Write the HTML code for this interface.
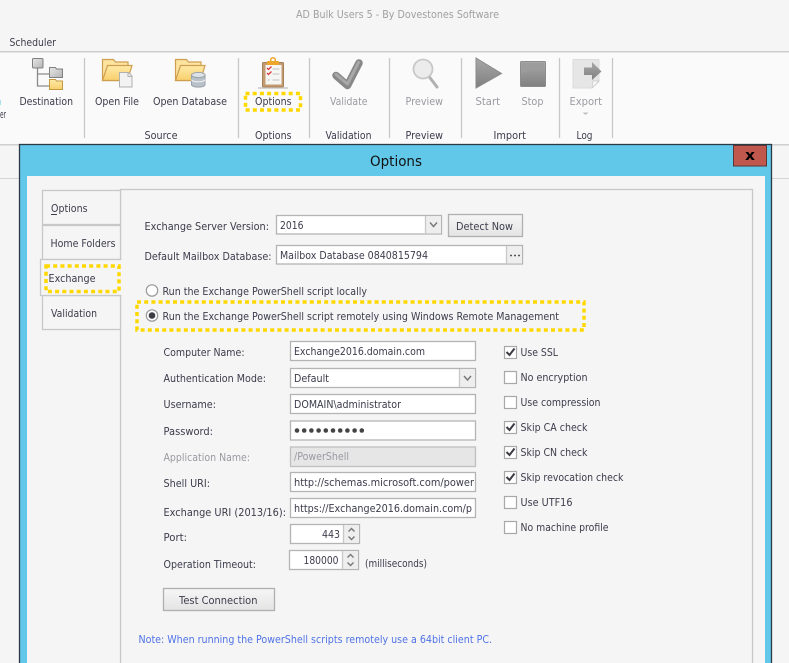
<!DOCTYPE html>
<html><head><meta charset="utf-8"><style>
html,body{margin:0;padding:0;background:#f5f5f5;width:789px;height:663px;overflow:hidden}
svg{display:block}
text{font-family:"DejaVu Sans",sans-serif;font-size:11px;fill:#3c3c4c}
.g{fill:#9a9aa2}
.w{fill:none;stroke:#ffd800;stroke-width:3.5;stroke-dasharray:4 3.2}
.f{fill:#fff;stroke:#b4b4b4;stroke-width:1.3}
.t{fill:#f5f5f5;stroke:#c8c8c8;stroke-width:1.3}
.s{fill:none;stroke:#c8c8c8;stroke-width:1.3}
.c{fill:#fff;stroke:#a8a8a8;stroke-width:1.2}
.k{fill:none;stroke:#3c3c44;stroke-width:2}
.a{fill:none;stroke:#777;stroke-width:1.4}
</style></head><body>
<svg width="789" height="663" viewBox="0 0 789 663" xmlns="http://www.w3.org/2000/svg">
<defs>
<linearGradient id="y" x1="0" y1="0" x2="0" y2="1"><stop offset="0" stop-color="#ffeaa8"/><stop offset="1" stop-color="#f8cf6c"/></linearGradient>
<linearGradient id="gr" x1="0" y1="0" x2="1" y2="1"><stop offset="0" stop-color="#e8e8e8"/><stop offset="1" stop-color="#b4b4b4"/></linearGradient>
<linearGradient id="dk" x1="0" y1="0" x2="0" y2="1"><stop offset="0" stop-color="#a8a8a8"/><stop offset="1" stop-color="#808080"/></linearGradient>
<linearGradient id="b" x1="0" y1="0" x2="0" y2="1"><stop offset="0" stop-color="#f6f6f6"/><stop offset="1" stop-color="#e4e4e4"/></linearGradient>
</defs>
<rect width="789" height="663" fill="#f5f5f5"/>
<rect y="52" width="789" height="92" fill="#fafafa"/>
<rect y="51" width="789" height="1.5" fill="#cfcfcf"/>
<rect y="144" width="789" height="1.5" fill="#cfcfcf"/>
<rect y="178" width="20" height="1" fill="#d4d4d4"/>
<rect x="772" y="178" width="17" height="1" fill="#d4d4d4"/>

<text x="296" y="18" textLength="203" lengthAdjust="spacingAndGlyphs" style="fill:#a0a0a0">AD Bulk Users 5 - By Dovestones Software</text>
<text x="9.5" y="46" textLength="46.5" lengthAdjust="spacingAndGlyphs">Scheduler</text>

<!-- ribbon separators -->
<path class="s" d="M84.5 58V138M238.5 58V138M309.5 58V138M389.5 58V138M461.5 58V138M559.5 58V138M612.5 58V138"/>

<!-- destination icon -->
<path d="M37.5 68V86H49M37.5 74H49" fill="none" stroke="#8a8a8a" stroke-width="1.3"/>
<rect x="32.5" y="58.5" width="10.5" height="9.500" rx="1" fill="url(#gr)" stroke="#808080"/>
<path d="M49.5 77.500V67.500h6l1 1.500h6v8.500z" fill="url(#gr)" stroke="#808080"/>
<path d="M49.500 89.500V79.500h6l1 1.500h6v8.500z" fill="url(#y)" stroke="#c49a40"/>
<!-- open file icon -->
<path d="M102.500 80.500V59.500h11l2 2.500h12.500V80.500z" fill="#fbe3a0" stroke="#cf9f50" stroke-width="1.200"/>
<path d="M102.500 80.500l5-15h24.500l-4.500 15z" fill="url(#y)" stroke="#cf9f50" stroke-width="1.200"/>
<path d="M119.500 72.500h9l3.500 3.500v11h-12.500z" fill="#f2f2f2" stroke="#b0b0b0"/>
<path d="M128 73v3.500h3.500" fill="none" stroke="#b0b0b0"/>
<!-- open database icon -->
<path d="M175.500 80.500V59.500h11l2 2.500h12.500V80.500z" fill="#fbe3a0" stroke="#cf9f50" stroke-width="1.200"/>
<path d="M175.500 80.500l5-15h24.500l-4.500 15z" fill="url(#y)" stroke="#cf9f50" stroke-width="1.200"/>
<path d="M191.500 75v9.500c0 3.500 13.500 3.500 13.500 0V75z" fill="#b8c0c8" stroke="#98a0a8"/>
<ellipse cx="198.300" cy="75" rx="6.800" ry="2.600" fill="#dde2e6" stroke="#98a0a8"/>
<path d="M191.500 79.500c0 3 13.500 3 13.500 0" fill="none" stroke="#eef0f2"/>
<!-- clipboard -->
<rect x="258" y="87" width="30" height="2" fill="#d4d4d4"/>
<rect x="262.500" y="62.500" width="21" height="24.500" rx="1" fill="#c49a72" stroke="#a88058"/>
<rect x="265.500" y="65" width="16" height="19.500" fill="#f6f6f2"/>
<rect x="267" y="61" width="12" height="4" rx="1" fill="#eda52a"/>
<circle cx="273" cy="60" r="2.300" fill="none" stroke="#eda52a" stroke-width="1.500"/>
<path d="M267 68l1.500 1.500 3-3M267 73l1.500 1.500 3-3" fill="none" stroke="#d8383c" stroke-width="1.300"/>
<circle cx="268.500" cy="80" r="1" fill="#ccc"/>
<path d="M272.500 69h7M272.500 74h7M272.500 80h7" stroke="#c0c0c0"/>
<!-- validate -->
<path d="M336 75.500L347.500 85.500L359 63" fill="none" stroke="#888" stroke-width="7.500" stroke-linecap="round" stroke-linejoin="round"/>
<path d="M336 74.500L347.500 84L358.500 62.500" fill="none" stroke="#a8a8a8" stroke-width="3" stroke-linecap="round" stroke-linejoin="round"/>
<!-- preview -->
<path d="M429 76.500L437 87" stroke="#b0b0b0" stroke-width="3" stroke-linecap="round"/>
<circle cx="423" cy="69" r="9.500" fill="#ececec" stroke="#c8c8c8" stroke-width="1.800"/>
<!-- start stop -->
<path d="M476 58L501.500 73.500L476 88z" fill="url(#dk)" stroke="#8a8a8a"/>
<rect x="520.500" y="61.500" width="25" height="25" rx="1" fill="url(#dk)" stroke="#8c8c8c"/>
<path d="M522 74c5-5 14-6 22-6v-5h-22z" fill="#9c9c9c"/>
<!-- export -->
<path d="M573 59.500h26v22l-7 6.500h-19z" fill="#e6e6e6" stroke="#dcdcdc"/>
<path d="M592 88l1-7h6z" fill="#f8f8f8" stroke="#c8c8c8" stroke-width=".7"/>
<path d="M584 67.500h8V62l9.500 9.500-9.500 8.500v-5h-8z" fill="url(#dk)"/>
<path d="M582.500 112.500h6l-3 2.500z" fill="#c0c0c0"/>

<!-- ribbon text -->
<text x="0" y="118" textLength="6" lengthAdjust="spacingAndGlyphs">er</text>
<rect x="0" y="100" width="1" height="5" fill="#a8e0ec"/>
<text x="19.500" y="105" textLength="53.500" lengthAdjust="spacingAndGlyphs">Destination</text>
<text x="95" y="105" textLength="44" lengthAdjust="spacingAndGlyphs">Open File</text>
<text x="153" y="105" textLength="74" lengthAdjust="spacingAndGlyphs">Open Database</text>
<text x="255" y="105" textLength="36.500" lengthAdjust="spacingAndGlyphs">Options</text>
<text class="g" x="330" y="105" textLength="37.500" lengthAdjust="spacingAndGlyphs">Validate</text>
<text class="g" x="405.500" y="105" textLength="37.500" lengthAdjust="spacingAndGlyphs">Preview</text>
<text class="g" x="475.500" y="105" textLength="24.500" lengthAdjust="spacingAndGlyphs">Start</text>
<text class="g" x="521.500" y="105" textLength="22" lengthAdjust="spacingAndGlyphs">Stop</text>
<text class="g" x="569.500" y="105" textLength="32.500" lengthAdjust="spacingAndGlyphs">Export</text>
<text x="144.500" y="139" textLength="33" lengthAdjust="spacingAndGlyphs">Source</text>
<text x="255" y="139" textLength="36.500" lengthAdjust="spacingAndGlyphs">Options</text>
<text x="325.500" y="139" textLength="46" lengthAdjust="spacingAndGlyphs">Validation</text>
<text x="405.500" y="139" textLength="37.500" lengthAdjust="spacingAndGlyphs">Preview</text>
<text x="493.500" y="139" textLength="32.500" lengthAdjust="spacingAndGlyphs">Import</text>
<text x="576.500" y="139" textLength="16" lengthAdjust="spacingAndGlyphs">Log</text>
<rect class="w" x="245.500" y="93.500" width="55" height="16.500"/>

<!-- dialog -->
<rect x="19.500" y="144.500" width="752" height="530" fill="#62c8ea" stroke="#2c3a46" stroke-width="1.300"/>
<rect x="27" y="176" width="738" height="490" fill="#f5f5f5"/>
<text x="370" y="166" textLength="52" lengthAdjust="spacingAndGlyphs" style="font-size:14.500px;fill:#111">Options</text>
<rect x="733.500" y="145.500" width="33" height="20.500" fill="#c0584e" stroke="#5c3632"/>
<text x="745" y="160" textLength="10" lengthAdjust="spacingAndGlyphs" style="font-size:14px;font-weight:bold;fill:#000">x</text>

<!-- tabs -->
<rect class="t" x="120.500" y="189.500" width="632" height="490"/>
<rect class="t" x="42.500" y="190.500" width="78" height="34"/>
<rect class="t" x="42.500" y="225.500" width="78" height="34"/>
<rect class="t" x="42.500" y="295.500" width="78" height="34"/>
<rect x="40.500" y="259.500" width="81" height="35.500" fill="#f5f5f5"/>
<path class="s" d="M121.500 259.500H40.500V295.500H121.500"/>
<text x="51" y="212" textLength="36.500" lengthAdjust="spacingAndGlyphs">Options</text>
<rect x="51" y="214" width="6" height="1" fill="#3c3c4c"/>
<text x="50.500" y="247" textLength="65" lengthAdjust="spacingAndGlyphs">Home Folders</text>
<text x="48.500" y="282" textLength="47" lengthAdjust="spacingAndGlyphs">Exchange</text>
<text x="51" y="317" textLength="46" lengthAdjust="spacingAndGlyphs">Validation</text>
<rect class="w" x="46" y="266" width="73" height="25.500"/>

<!-- top form -->
<text x="144.500" y="230" textLength="124.500" lengthAdjust="spacingAndGlyphs">Exchange Server Version:</text>
<text x="144.500" y="260" textLength="127" lengthAdjust="spacingAndGlyphs">Default Mailbox Database:</text>
<rect class="f" x="276.500" y="215.500" width="165" height="18.500"/>
<rect x="426" y="216.500" width="15" height="17" fill="#eee"/>
<path class="s" d="M425.500 216V234"/>
<path class="a" d="M430 222.500l3.500 4 3.500-4" stroke-width="1.700"/>
<text x="280" y="229" textLength="23.500" lengthAdjust="spacingAndGlyphs">2016</text>
<rect x="448.500" y="214.500" width="74" height="22" fill="url(#b)" stroke="#b0b0b0" stroke-width="1.300"/>
<text x="456" y="230" textLength="57" lengthAdjust="spacingAndGlyphs">Detect Now</text>
<rect class="f" x="276.500" y="245.500" width="246" height="18.500"/>
<rect x="507" y="246.500" width="15" height="17" fill="#eee"/>
<path class="s" d="M506.500 246V264"/>
<path d="M510 255.500h2M514 255.500h2M518 255.500h2" stroke="#555" stroke-width="1.500"/>
<text x="280" y="259" textLength="148" lengthAdjust="spacingAndGlyphs">Mailbox Database 0840815794</text>

<!-- radios -->
<circle cx="152" cy="290.500" r="5.700" fill="#fff" stroke="#999" stroke-width="1.200"/>
<circle cx="152" cy="315.500" r="5.700" fill="#fff" stroke="#999" stroke-width="1.200"/>
<circle cx="152" cy="315.500" r="3.300" fill="#3c3c44"/>
<text x="162.500" y="295" textLength="204.500" lengthAdjust="spacingAndGlyphs">Run the Exchange PowerShell script locally</text>
<text x="162.500" y="320" textLength="396.500" lengthAdjust="spacingAndGlyphs">Run the Exchange PowerShell script remotely using Windows Remote Management</text>
<rect class="w" x="137" y="302" width="447" height="28"/>

<!-- labels -->
<text x="163.500" y="356" textLength="81" lengthAdjust="spacingAndGlyphs">Computer Name:</text>
<text x="163.500" y="382" textLength="102.500" lengthAdjust="spacingAndGlyphs">Authentication Mode:</text>
<text x="163.500" y="408" textLength="52.500" lengthAdjust="spacingAndGlyphs">Username:</text>
<text x="163.500" y="435" textLength="49.500" lengthAdjust="spacingAndGlyphs">Password:</text>
<text class="g" x="163.500" y="461" textLength="86.500" lengthAdjust="spacingAndGlyphs">Application Name:</text>
<text x="163.500" y="487" textLength="46.500" lengthAdjust="spacingAndGlyphs">Shell URI:</text>
<text x="163.500" y="516" textLength="122.500" lengthAdjust="spacingAndGlyphs">Exchange URI (2013/16):</text>
<text x="163.500" y="541" textLength="23.500" lengthAdjust="spacingAndGlyphs">Port:</text>
<text x="163.500" y="568" textLength="92.500" lengthAdjust="spacingAndGlyphs">Operation Timeout:</text>

<!-- fields -->
<rect class="f" x="290.500" y="341.500" width="185" height="19"/>
<text x="294" y="355" textLength="131" lengthAdjust="spacingAndGlyphs">Exchange2016.domain.com</text>
<rect class="f" x="290.500" y="368.500" width="185" height="19"/>
<rect x="460" y="369.500" width="15" height="17" fill="#eee"/>
<path class="s" d="M459.500 369V387"/>
<path class="a" d="M464 376l3.500 4 3.500-4" stroke-width="1.700"/>
<text x="294" y="382" textLength="35" lengthAdjust="spacingAndGlyphs">Default</text>
<rect class="f" x="290.500" y="394.500" width="185" height="19"/>
<text x="294" y="408" textLength="107" lengthAdjust="spacingAndGlyphs">DOMAIN\administrator</text>
<rect class="f" x="290.500" y="421" width="185" height="19"/>
<g fill="#444"><circle cx="297" cy="430.500" r="2.300"/><circle cx="304.200" cy="430.500" r="2.300"/><circle cx="311.400" cy="430.500" r="2.300"/><circle cx="318.600" cy="430.500" r="2.300"/><circle cx="325.800" cy="430.500" r="2.300"/><circle cx="333" cy="430.500" r="2.300"/><circle cx="340.200" cy="430.500" r="2.300"/><circle cx="347.400" cy="430.500" r="2.300"/><circle cx="354.600" cy="430.500" r="2.300"/><circle cx="361.800" cy="430.500" r="2.300"/></g>
<rect x="290.500" y="447" width="185" height="19.500" fill="#e6e6e6" stroke="#c0c0c0" stroke-width="1.300"/>
<text class="g" x="294" y="460" textLength="55" lengthAdjust="spacingAndGlyphs">/PowerShell</text>
<rect class="f" x="290.500" y="472.500" width="185" height="19"/>
<text x="294" y="486" textLength="180" lengthAdjust="spacingAndGlyphs">http://schemas.microsoft.com/power</text>
<rect class="f" x="290.500" y="498.500" width="185" height="19"/>
<text x="294" y="512" textLength="178" lengthAdjust="spacingAndGlyphs">https://Exchange2016.domain.com/p</text>

<rect class="f" x="290.500" y="524.500" width="69" height="19"/>
<rect x="344" y="525.500" width="15" height="17" fill="#eee"/>
<path class="s" d="M343.500 525V543"/>
<path class="a" d="M348.500 531.500l3-3 3 3M348.500 536.500l3 3 3-3"/>
<text x="322" y="538" textLength="18" lengthAdjust="spacingAndGlyphs">443</text>
<rect class="f" x="289.500" y="550.500" width="69" height="19"/>
<rect x="343" y="551.500" width="15" height="17" fill="#eee"/>
<path class="s" d="M342.500 551V569"/>
<path class="a" d="M347.500 557.500l3-3 3 3M347.500 562.500l3 3 3-3"/>
<text x="303.500" y="564" textLength="35" lengthAdjust="spacingAndGlyphs">180000</text>
<text x="365" y="567" textLength="62" lengthAdjust="spacingAndGlyphs">(milliseconds)</text>

<rect x="163.500" y="588.500" width="111" height="22" fill="url(#b)" stroke="#b0b0b0" stroke-width="1.300"/>
<text x="179" y="604" textLength="78.500" lengthAdjust="spacingAndGlyphs">Test Connection</text>
<text x="138.500" y="643" textLength="353.500" lengthAdjust="spacingAndGlyphs" style="fill:#4f72e6">Note: When running the PowerShell scripts remotely use a 64bit client PC.</text>

<!-- checkboxes -->
<rect class="c" x="504.500" y="346.500" width="12" height="12"/>
<rect class="c" x="504.500" y="371.500" width="12" height="12"/>
<rect class="c" x="504.500" y="396.500" width="12" height="12"/>
<rect class="c" x="504.500" y="421.500" width="12" height="12"/>
<rect class="c" x="504.500" y="446.500" width="12" height="12"/>
<rect class="c" x="504.500" y="471.500" width="12" height="12"/>
<rect class="c" x="504.500" y="496.500" width="12" height="12"/>
<rect class="c" x="504.500" y="521.500" width="12" height="12"/>
<path class="k" d="M506.500 352l3 3 5-6.500M506.500 427l3 3 5-6.500M506.500 452l3 3 5-6.500M506.500 477l3 3 5-6.500"/>
<text x="520.500" y="356" textLength="37.500" lengthAdjust="spacingAndGlyphs">Use SSL</text>
<text x="520.500" y="381" textLength="67" lengthAdjust="spacingAndGlyphs">No encryption</text>
<text x="520.500" y="406" textLength="80" lengthAdjust="spacingAndGlyphs">Use compression</text>
<text x="520.500" y="431" textLength="67" lengthAdjust="spacingAndGlyphs">Skip CA check</text>
<text x="520.500" y="456" textLength="67" lengthAdjust="spacingAndGlyphs">Skip CN check</text>
<text x="520.500" y="481" textLength="103" lengthAdjust="spacingAndGlyphs">Skip revocation check</text>
<text x="520.500" y="506" textLength="52" lengthAdjust="spacingAndGlyphs">Use UTF16</text>
<text x="520.500" y="531" textLength="88" lengthAdjust="spacingAndGlyphs">No machine profile</text>
</svg>
</body></html>
